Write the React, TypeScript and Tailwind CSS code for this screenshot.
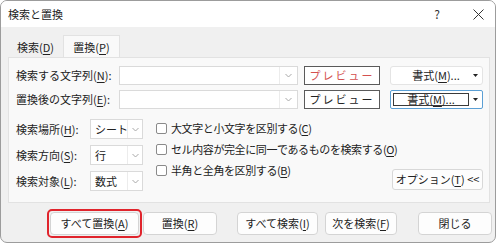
import React from "react";

const F = { fontFamily: '"Noto Sans CJK JP", "Noto Sans", sans-serif' };

function U({ c }: { c: string }) {
  return <span className="underline underline-offset-[2px] decoration-[1px]">{c}</span>;
}

function Chevron() {
  return (
    <svg width="7" height="5" viewBox="0 0 7 5" className="block">
      <path d="M0.5 1 L3.5 4 L6.5 1" stroke="#a8a8a8" strokeWidth="1" fill="none" />
    </svg>
  );
}

function Tri() {
  return (
    <svg width="5" height="3" viewBox="0 0 5 3" className="block">
      <path d="M0 0 L5 0 L2.5 3 Z" fill="#222" />
    </svg>
  );
}

function Combo({ w, text, arrowW }: { w: string; text?: string; arrowW: string }) {
  return (
    <div className={`${w} h-full bg-white border border-[#dadada] flex`}>
      <div className="flex-1 flex items-center pl-[4px] text-[11px] text-[#222] whitespace-nowrap overflow-hidden">
        {text}
      </div>
      <div className={`${arrowW} border-l border-[#ececec] flex items-center justify-center shrink-0`}>
        <Chevron />
      </div>
    </div>
  );
}

function Check({ children }: { children: React.ReactNode }) {
  return (
    <div className="flex items-center h-[16px] whitespace-nowrap">
      <div className="w-[11px] h-[11px] border border-[#8a8a8a] rounded-[2px] bg-white mr-[4px] shrink-0" />
      <span className="text-[11px] text-[#222] leading-none tracking-[-0.4px]">{children}</span>
    </div>
  );
}

function Btn({ w, children, cls = "" }: { w: string; children: React.ReactNode; cls?: string }) {
  return (
    <div
      className={`${w} h-[23px] bg-[#fdfdfd] border border-[#d4d4d4] rounded-[4px] flex items-center justify-center text-[11px] text-[#222] whitespace-nowrap ${cls}`}
    >
      {children}
    </div>
  );
}

export default function App() {
  return (
    <div className="w-[500px] h-[246px] bg-white" style={F}>
      <div className="w-[496px] h-[243px] border border-[#9c9c9c] rounded-[7px] bg-[#f0f0f0] overflow-hidden flex flex-col">
        {/* title bar */}
        <div className="h-[26px] bg-white flex items-center pl-[7px] text-[11px] text-[#222] shrink-0">
          <span>検索と置換</span>
          <span className="ml-auto text-[12px] text-[#333] mr-[33px]">?</span>
          <svg width="11" height="11" viewBox="0 0 11 11" className="mr-[11px]">
            <path d="M0.5 0.5 L10.5 10.5 M10.5 0.5 L0.5 10.5" stroke="#333" strokeWidth="1" />
          </svg>
        </div>

        {/* tabs */}
        <div className="flex pl-[7px] mt-[8px] h-[22px] text-[11px] text-[#222]">
          <div className="w-[55px] flex items-center justify-center pt-[2px] whitespace-nowrap">
            検索(<U c="D" />)
          </div>
          <div className="w-[57px] bg-[#f9f9f9] border-t border-l border-r border-[#e2e2e2] flex items-center justify-center pt-[2px] whitespace-nowrap">
            置換(<U c="P" />)
          </div>
        </div>

        {/* panel */}
        <div className="ml-[7px] w-[482px] h-[146px] bg-[#f9f9f9] border border-[#e2e2e2] flex flex-col pt-[8px] pl-[7px]">
          <div className="flex items-center h-[19px]">
            <div className="w-[103px] text-[11px] text-[#222] whitespace-nowrap">
              検索する文字列(<U c="N" />):
            </div>
            <Combo w="w-[179px]" arrowW="w-[18px]" />
            <div className="ml-[6px] w-[76px] h-[19px] bg-white border border-[#5a5a5a] flex items-center justify-center text-[11px] text-[#d4504f] tracking-[2px] whitespace-nowrap">
              プレビュー
            </div>
            <div className="ml-[10px] w-[93px] h-[19px] bg-white border border-[#e4e4e4] rounded-[3px] flex items-center text-[11px] text-[#222] whitespace-nowrap">
              <span className="flex-1 text-center pl-[8px]">
                書式(<U c="M" />)...
              </span>
              <span className="mr-[4px]">
                <Tri />
              </span>
            </div>
          </div>
          <div className="flex items-center h-[19px] mt-[5px]">
            <div className="w-[103px] text-[11px] text-[#222] whitespace-nowrap">
              置換後の文字列(<U c="E" />):
            </div>
            <Combo w="w-[179px]" arrowW="w-[18px]" />
            <div className="ml-[6px] w-[76px] h-[19px] bg-white border border-[#5a5a5a] flex items-center justify-center text-[11px] text-[#222] tracking-[2px] whitespace-nowrap">
              プレビュー
            </div>
            <div className="ml-[10px] w-[93px] h-[19px] bg-white border border-[#5b9fd4] rounded-[2px] flex items-center text-[11px] text-[#222] p-[2px] whitespace-nowrap">
              <span className="flex-1 h-full border border-[#3a3a3a] flex items-center justify-center">
                書式(<U c="M" />)...
              </span>
              <span className="ml-[4px] mr-[2px]">
                <Tri />
              </span>
            </div>
          </div>

          <div className="flex mt-[10px]">
            <div className="flex flex-col gap-[6px] shrink-0">
              {[
                ["検索場所(", "H", "):", "シート"],
                ["検索方向(", "S", "):", "行"],
                ["検索対象(", "L", "):", "数式"],
              ].map(([a, b, c, v]) => (
                <div key={b} className="flex items-center h-[20px]">
                  <div className="w-[74px] text-[11px] text-[#222] whitespace-nowrap">
                    {a}
                    <U c={b} />
                    {c}
                  </div>
                  <Combo w="w-[53px]" text={v} arrowW="w-[15px]" />
                </div>
              ))}
            </div>
            <div className="w-[230px] shrink-0 flex flex-col gap-[5px] ml-[13px] mt-[1px]">
              <Check>
                大文字と小文字を区別する(<U c="C" />)
              </Check>
              <Check>
                セル内容が完全に同一であるものを検索する(<U c="O" />)
              </Check>
              <Check>
                半角と全角を区別する(<U c="B" />)
              </Check>
            </div>
            <div className="ml-auto mr-[6px] flex items-end pb-[1px]">
              <div className="w-[91px] h-[21px] bg-[#fdfdfd] border border-[#d8d8d8] rounded-[3px] flex items-center justify-center text-[11px] text-[#222] whitespace-nowrap">
                オプション(<U c="T" />)&nbsp;&lt;&lt;
              </div>
            </div>
          </div>
        </div>

        {/* bottom buttons */}
        <div className="flex items-center mt-[6px] pl-[46px]">
          <div className="border-[2.5px] border-[#e0242c] rounded-[5px] p-[1px]">
            <Btn w="w-[89px]">
              すべて置換(<U c="A" />)
            </Btn>
          </div>
          <Btn w="w-[74px]" cls="ml-[1px]">
            置換(<U c="R" />)
          </Btn>
          <Btn w="w-[81px]" cls="ml-[20px]">
            すべて検索(<U c="I" />)
          </Btn>
          <Btn w="w-[72px]" cls="ml-[7px]">
            次を検索(<U c="F" />)
          </Btn>
          <Btn w="w-[74px]" cls="ml-[21px]">
            閉じる
          </Btn>
        </div>
      </div>
    </div>
  );
}
